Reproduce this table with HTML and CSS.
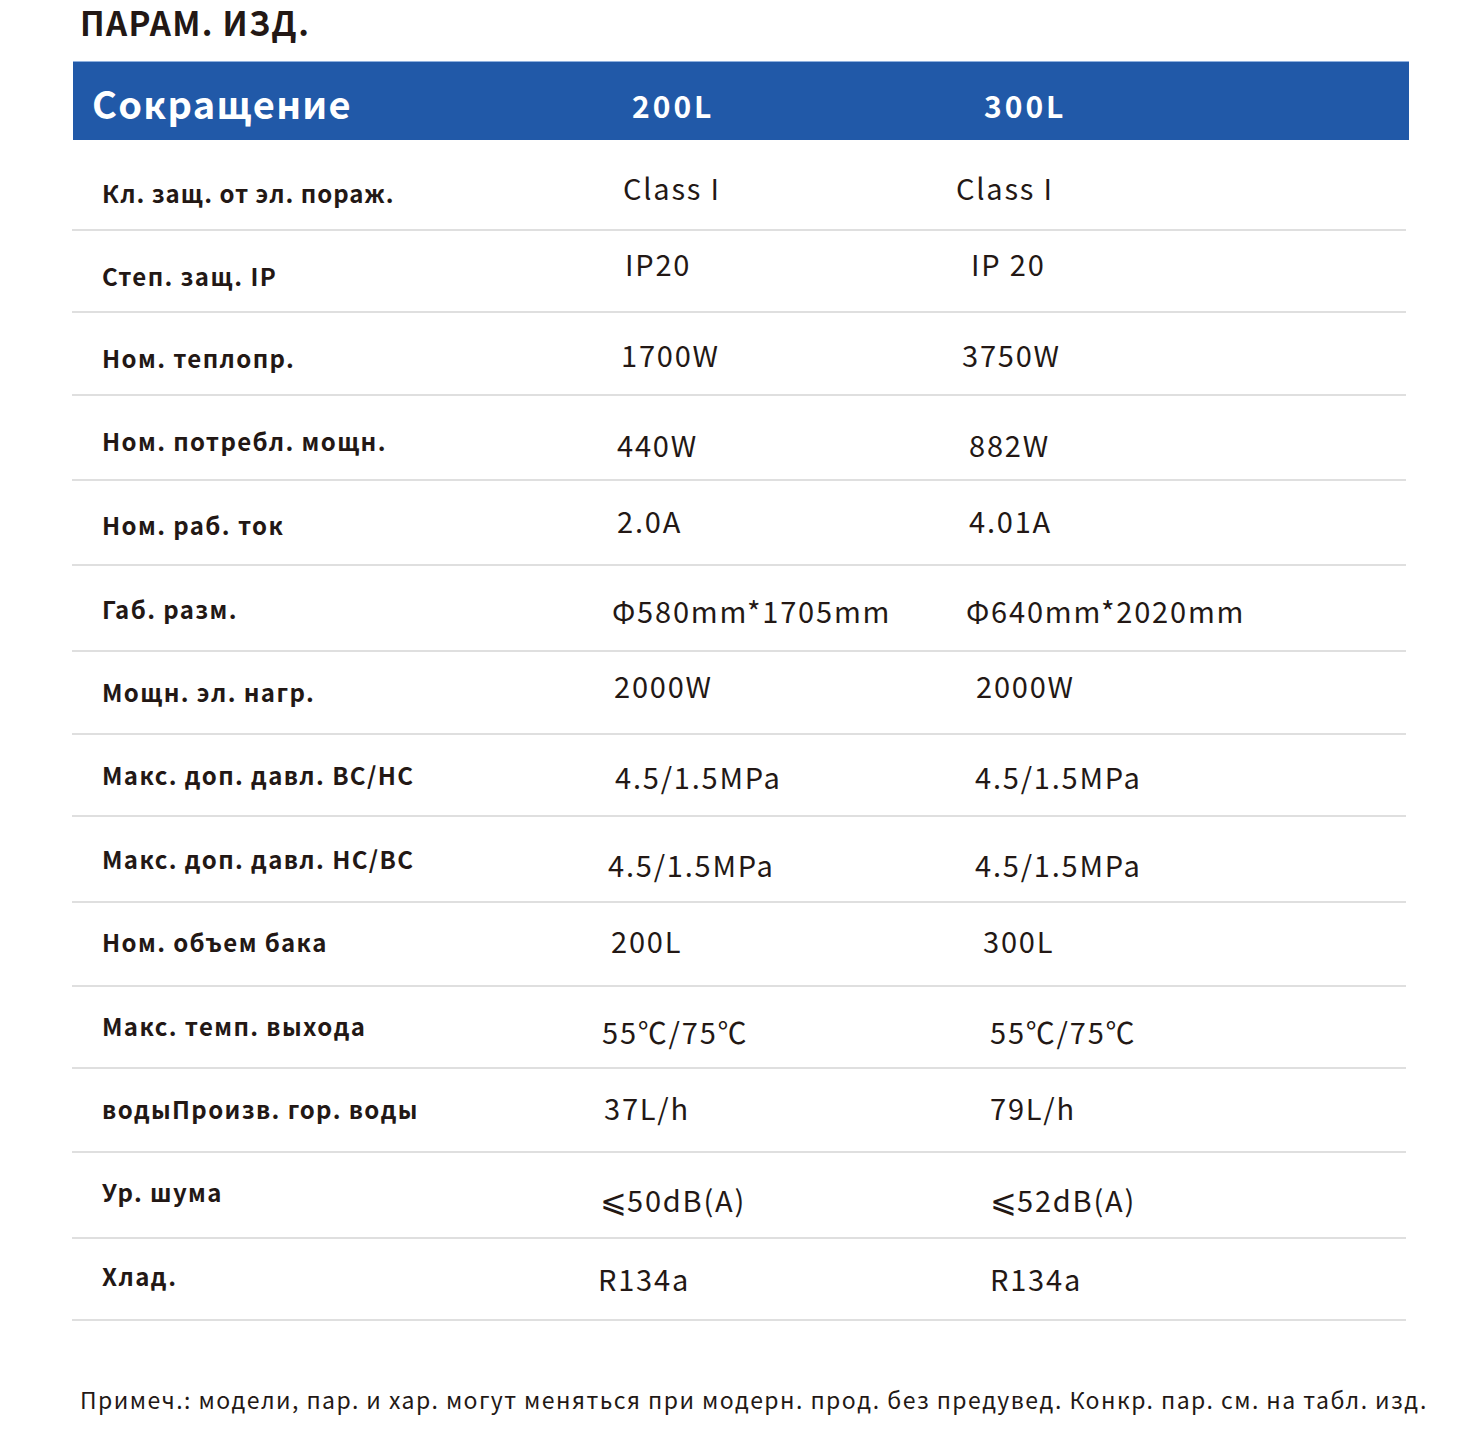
FILE: index.html
```html
<!DOCTYPE html>
<html lang="ru">
<head>
<meta charset="utf-8">
<title>ПАРАМ. ИЗД.</title>
<link rel="stylesheet" href="styles.css">
</head>
<body>
<div class="page">
  <h1 class="title">ПАРАМ. ИЗД.</h1>
  <div class="spec">
    <div class="head">
      <div class="h-lab">Сокращение</div>
      <div class="h-v1">200L</div>
      <div class="h-v2">300L</div>
    </div>
    <div class="row r1"><div class="lab">Кл. защ. от эл. пораж.</div><div class="v1">Class I</div><div class="v2">Class I</div></div>
    <div class="row r2"><div class="lab">Степ. защ. IP</div><div class="v1">IP20</div><div class="v2">IP 20</div></div>
    <div class="row r3"><div class="lab">Ном. теплопр.</div><div class="v1">1700W</div><div class="v2">3750W</div></div>
    <div class="row r4"><div class="lab">Ном. потребл. мощн.</div><div class="v1">440W</div><div class="v2">882W</div></div>
    <div class="row r5"><div class="lab">Ном. раб. ток</div><div class="v1">2.0A</div><div class="v2">4.01A</div></div>
    <div class="row r6"><div class="lab">Габ. разм.</div><div class="v1">Φ580mm*1705mm</div><div class="v2">Φ640mm*2020mm</div></div>
    <div class="row r7"><div class="lab">Мощн. эл. нагр.</div><div class="v1">2000W</div><div class="v2">2000W</div></div>
    <div class="row r8"><div class="lab">Макс. доп. давл. ВС/НС</div><div class="v1">4.5/1.5MPa</div><div class="v2">4.5/1.5MPa</div></div>
    <div class="row r9"><div class="lab">Макс. доп. давл. НС/ВС</div><div class="v1">4.5/1.5MPa</div><div class="v2">4.5/1.5MPa</div></div>
    <div class="row r10"><div class="lab">Ном. объем бака</div><div class="v1">200L</div><div class="v2">300L</div></div>
    <div class="row r11"><div class="lab">Макс. темп. выхода</div><div class="v1">55℃/75℃</div><div class="v2">55℃/75℃</div></div>
    <div class="row r12"><div class="lab">водыПроизв. гор. воды</div><div class="v1">37L/h</div><div class="v2">79L/h</div></div>
    <div class="row r13"><div class="lab">Ур. шума</div><div class="v1"><span class="le">⩽</span>50dB(A)</div><div class="v2"><span class="le">⩽</span>52dB(A)</div></div>
    <div class="row r14"><div class="lab">Хлад.</div><div class="v1">R134a</div><div class="v2">R134a</div></div>
  </div>
  <p class="note">Примеч.: модели, пар. и хар. могут меняться при модерн. прод. без предувед. Конкр. пар. см. на табл. изд.</p>
</div>
</body>
</html>
```
FILE: styles.css
```css
html, body {
  margin: 0;
  padding: 0;
  background: #ffffff;
}
body {
  font-family: "Noto Sans CJK SC", "Noto Sans", sans-serif;
  color: #231815;
}
.page {
  padding: 0 0 30px 72px;
  width: 1337px;
}
.title {
  margin: 0;
  height: 61px;
  box-sizing: border-box;
  padding: 3px 0 0 8px;
  font-size: 33px;
  line-height: 1.2;
  font-weight: 700;
  letter-spacing: 1.3px;
}
.spec {
  display: flex;
  flex-direction: column;
}
.head {
  display: grid;
  grid-template-columns: 524px 358px 1fr;
  align-items: start;
  height: 79px;
  box-sizing: border-box;
  margin-left: 1px;
  background: #2159a8;
  border-top: 1px solid #8fb0de;
  color: #ffffff;
  font-weight: 700;
  line-height: 1;
}
.h-lab {
  padding: 22px 0 0 19px;
  font-size: 38px;
  letter-spacing: 1.3px;
}
.h-v1 {
  padding: 28px 0 0 35px;
  font-size: 30px;
  letter-spacing: 3px;
}
.h-v2 {
  padding: 28px 0 0 29px;
  font-size: 30px;
  letter-spacing: 3px;
}
.row {
  display: grid;
  grid-template-columns: 524px 358px 1fr;
  align-items: start;
  height: var(--h);
  box-sizing: border-box;
  margin-right: 3px;
  border-bottom: 2px solid #dfdfdf;
  line-height: 1;
}
.lab {
  padding: var(--lt) 0 0 30px;
  font-size: 24px;
  font-weight: 700;
  letter-spacing: var(--ls, 1.4px);
}
.v1, .v2 {
  padding-top: var(--vt);
  font-size: 29px;
  font-weight: 400;
  letter-spacing: 1.8px;
}
.v1 { padding-left: var(--x1); }
.v2 { padding-left: var(--x2); }
.le {
  font-size: 32px;
  letter-spacing: 0;
}

.r1  { --h: 91px; --lt: 41px; --vt: 33px; --x1: 27px; --x2: 2px; --ls: 1px; }
.r2  { --h: 82px; --lt: 33px; --vt: 18px; --x1: 29px; --x2: 17px; }
.r3  { --h: 83px; --lt: 33px; --vt: 27px; --x1: 25px; --x2: 8px; }
.r4  { --h: 85px; --lt: 33px; --vt: 34px; --x1: 21px; --x2: 15px; }
.r5  { --h: 85px; --lt: 32px; --vt: 25px; --x1: 21px; --x2: 15px; }
.r6  { --h: 86px; --lt: 31px; --vt: 30px; --x1: 16px; --x2: 12px; }
.r7  { --h: 83px; --lt: 28px; --vt: 19px; --x1: 18px; --x2: 22px; }
.r8  { --h: 82px; --lt: 28px; --vt: 27px; --x1: 19px; --x2: 21px; }
.r9  { --h: 86px; --lt: 30px; --vt: 33px; --x1: 12px; --x2: 21px; }
.r10 { --h: 84px; --lt: 27px; --vt: 23px; --x1: 15px; --x2: 29px; }
.r11 { --h: 82px; --lt: 27px; --vt: 30px; --x1: 6px;  --x2: 36px; }
.r12 { --h: 84px; --lt: 28px; --vt: 24px; --x1: 8px;  --x2: 36px; }
.r13 { --h: 86px; --lt: 27px; --vt: 29px; --x1: 4px;  --x2: 36px; }
.r14 { --h: 82px; --lt: 25px; --vt: 25px; --x1: 2px;  --x2: 36px; }

.note {
  margin: 67px 0 0 8px;
  font-size: 23px;
  line-height: 1;
  font-weight: 400;
  letter-spacing: 1.45px;
  white-space: nowrap;
}
```
